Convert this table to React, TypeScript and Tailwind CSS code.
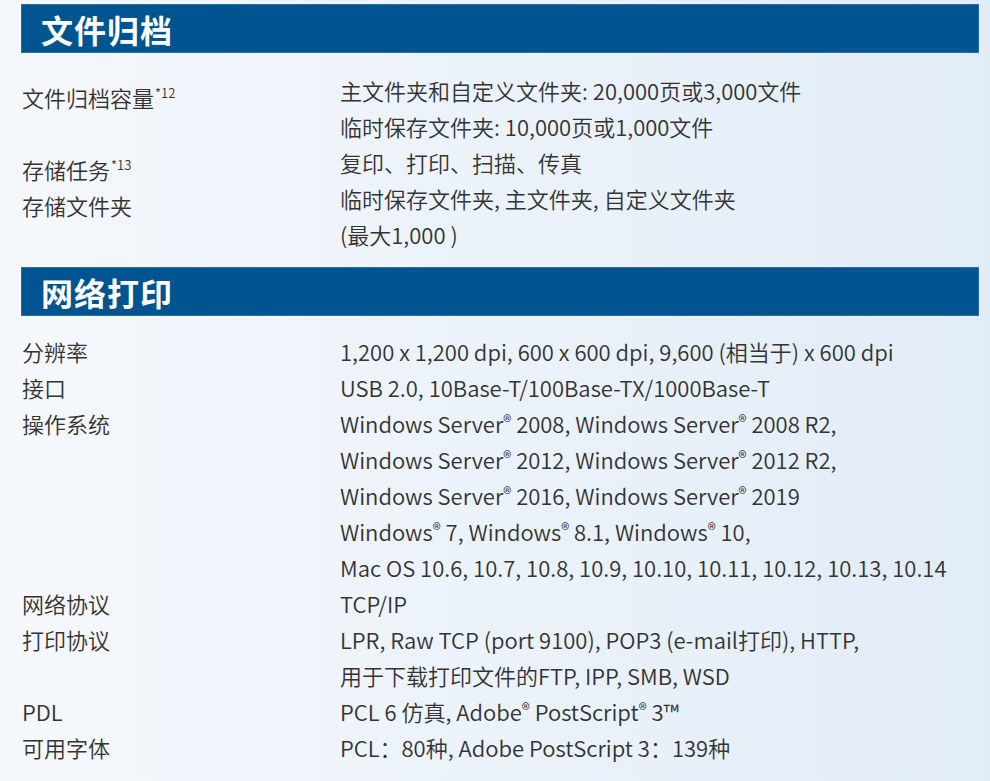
type Row = { label: string; sup?: string; lines: React.ReactNode[] };

const R = () => <span className="text-[17px] leading-none align-[0.3em]">®</span>;

const archiveRows: Row[] = [
  {
    label: '文件归档容量',
    sup: '*12',
    lines: ['主文件夹和自定义文件夹: 20,000页或3,000文件', '临时保存文件夹: 10,000页或1,000文件'],
  },
  { label: '存储任务', sup: '*13', lines: ['复印、打印、扫描、传真'] },
  { label: '存储文件夹', lines: ['临时保存文件夹, 主文件夹, 自定义文件夹', '(最大1,000 )'] },
];

const printRows: Row[] = [
  { label: '分辨率', lines: ['1,200 x 1,200 dpi, 600 x 600 dpi, 9,600 (相当于) x 600 dpi'] },
  { label: '接口', lines: ['USB 2.0, 10Base-T/100Base-TX/1000Base-T'] },
  {
    label: '操作系统',
    lines: [
      <>Windows Server<R /> 2008, Windows Server<R /> 2008 R2,</>,
      <>Windows Server<R /> 2012, Windows Server<R /> 2012 R2,</>,
      <>Windows Server<R /> 2016, Windows Server<R /> 2019</>,
      <>Windows<R /> 7, Windows<R /> 8.1, Windows<R /> 10,</>,
      'Mac OS 10.6, 10.7, 10.8, 10.9, 10.10, 10.11, 10.12, 10.13, 10.14',
    ],
  },
  { label: '网络协议', lines: ['TCP/IP'] },
  {
    label: '打印协议',
    lines: ['LPR, Raw TCP (port 9100), POP3 (e-mail打印), HTTP,', '用于下载打印文件的FTP, IPP, SMB, WSD'],
  },
  { label: 'PDL', lines: [<>PCL 6 仿真, Adobe<R /> PostScript<R /> 3™</>] },
  { label: '可用字体', lines: ['PCL：80种, Adobe PostScript 3：139种'] },
];

const SectionHeader = ({ title }: { title: string }) => (
  <div className="h-[49px] bg-[#005590] border border-[#2a6ea3] flex items-center pl-[19px]">
    <h2 className="text-[32px] font-bold text-white tracking-[1px] leading-none">{title}</h2>
  </div>
);

const SpecRows = ({ rows, offset }: { rows: Row[]; offset?: boolean }) => (
  <div className="flex flex-col">
    {rows.map((row) => (
      <div key={row.label} className="grid grid-cols-[319px_1fr]">
        <div className={`pl-px leading-[36px] ${offset ? 'pt-[7px] -mb-[7px]' : ''}`}>
          {row.label}
          {row.sup && <span className="text-[13px] leading-none align-[0.7em] ml-px">{row.sup}</span>}
        </div>
        <div>
          {row.lines.map((line, i) => (
            <div key={i} className="leading-[36px] whitespace-nowrap">
              {line}
            </div>
          ))}
        </div>
      </div>
    ))}
  </div>
);

export default function App() {
  return (
    <div
      className="w-[990px] h-[781px] overflow-hidden bg-gradient-to-r from-[#f5f8fc] to-[#e2ecf7] text-[#333333] text-[22px] font-[350]"
      style={{ fontFamily: '"Noto Sans CJK SC", "Noto Sans", sans-serif' }}
    >
      <div className="pl-[21px] pr-[11px] pt-[4px]">
        <SectionHeader title="文件归档" />
        <div className="mt-[19px]">
          <SpecRows rows={archiveRows} offset />
        </div>
        <div className="mt-[15px]">
          <SectionHeader title="网络打印" />
        </div>
        <div className="mt-[17px]">
          <SpecRows rows={printRows} />
        </div>
      </div>
    </div>
  );
}
